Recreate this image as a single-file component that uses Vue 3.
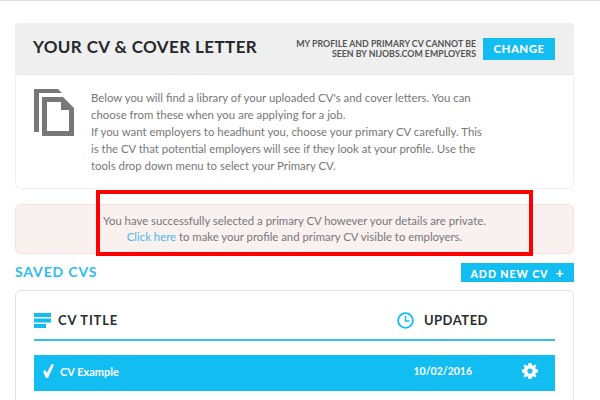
<template>
  <div class="page">
    <header class="head">
      <h1>YOUR CV &amp; COVER LETTER</h1>
      <p class="head-note">MY PROFILE AND PRIMARY CV CANNOT BE<br>SEEN BY NIJOBS.COM EMPLOYERS</p>
      <button class="change">CHANGE</button>
    </header>

    <section class="info">
      <svg class="docs" width="41" height="48" viewBox="0 0 41 48">
        <path d="M0 0H24L28 4H5V43H0Z" fill="#777" />
        <path fill-rule="evenodd" d="M8 8H29L40 19V47H8ZM13 13V42H35V21H27V13Z" fill="#777" />
      </svg>
      <p>
        Below you will find a library of your uploaded CV's and cover letters. You can<br>
        choose from these when you are applying for a job.<br>
        If you want employers to headhunt you, choose your primary CV carefully. This<br>
        is the CV that potential employers will see if they look at your profile. Use the<br>
        tools drop down menu to select your Primary CV.
      </p>
    </section>

    <section class="alert">
      <p>You have successfully selected a primary CV however your details are private.</p>
      <p class="alert-link"><a>Click here</a> to make your profile and primary CV visible to employers.</p>
    </section>

    <div class="saved-row">
      <h2>SAVED CVS</h2>
      <button class="add">ADD NEW CV<span>+</span></button>
    </div>

    <section class="panel">
      <div class="cols">
        <div class="col-title">
          <svg width="17" height="15" viewBox="0 0 17 15">
            <rect width="17" height="4" fill="#12bdf2" />
            <rect y="5.5" width="17" height="4" fill="#12bdf2" />
            <rect y="11" width="12" height="4" fill="#12bdf2" />
          </svg>
          <span>CV TITLE</span>
        </div>
        <div class="col-updated">
          <svg width="17" height="17" viewBox="0 0 17 17" fill="none" stroke="#12bdf2">
            <circle cx="8.5" cy="8.5" r="7.4" stroke-width="1.8" />
            <path d="M8.5 4V9H12.5" stroke-width="1.5" />
          </svg>
          <span>UPDATED</span>
        </div>
      </div>
      <div class="row">
        <svg class="tick" width="11" height="14" viewBox="0 0 11 14">
          <path d="M0 7.5L2.2 6L3.8 9L8.6 0L11 0.8L5 14H3Z" fill="#fff" />
        </svg>
        <span class="row-title">CV Example</span>
        <span class="row-date">10/02/2016</span>
        <svg class="gear" width="16" height="16" viewBox="0 0 16 16">
          <path fill="#fff" fill-rule="evenodd" d="M6.5 0H9.5L9.9 2.2L11.3 2.8L13.2 1.5L14.5 2.8L13.2 4.7L13.8 6.1L16 6.5V9.5L13.8 9.9L13.2 11.3L14.5 13.2L13.2 14.5L11.3 13.2L9.9 13.8L9.5 16H6.5L6.1 13.8L4.7 13.2L2.8 14.5L1.5 13.2L2.8 11.3L2.2 9.9L0 9.5V6.5L2.2 6.1L2.8 4.7L1.5 2.8L2.8 1.5L4.7 2.8L6.1 2.2ZM8 5.4A2.6 2.6 0 1 0 8 10.6A2.6 2.6 0 1 0 8 5.4Z" />
        </svg>
      </div>
    </section>

    <div class="highlight"></div>
  </div>
</template>

<script setup>
</script>

<style>
html, body { margin: 0; background: #fff; overflow: hidden; }
</style>

<style scoped>
.page {
  position: relative; width: 600px; height: 400px; overflow: hidden; box-sizing: border-box;
  padding: 22px 26px 0 15px; border-top: 1px solid #ddd;
  font-family: Lato, "Open Sans", sans-serif; color: #777; background: #fff;
}
h1, h2, p { margin: 0; }
button { border: 0; color: #fff; background: #12bdf2; font-family: inherit; font-weight: 900; padding: 0; }

.head {
  display: flex; align-items: center; height: 52px; padding: 0 19px 0 18px; box-sizing: border-box;
  background: #efefef; border-radius: 4px; border-bottom: 1px solid #e6e6e6;
}
h1 { font-size: 17px; font-weight: 700; letter-spacing: 0.4px; color: #26282c; margin-right: auto; padding-bottom: 5px; white-space: nowrap; }
.head-note { font-size: 8.8px; font-weight: 700; line-height: 10px; text-align: right; color: #555; margin-right: 7px; }
.change { width: 72px; height: 22px; font-size: 11.5px; letter-spacing: 0.4px; }

.info {
  display: flex; height: 114px; box-sizing: border-box; padding: 14px 18px 0;
  border: 1px solid #f1f1f1; border-top: 0; border-radius: 0 0 6px 6px;
}
.docs { flex: none; margin: 0 16px 0 0; }
.info p { font-size: 11.4px; line-height: 17.1px; color: #777; white-space: nowrap; }

.alert {
  margin-top: 15px; height: 50px; box-sizing: border-box; padding: 7px 0 0;
  background: #f9f0f0; border: 1px solid #f9dfdf; border-radius: 6px;
  text-align: center; font-size: 11.35px; line-height: 17px; color: #777;
}
.alert-link { margin-top: -1px; }
.alert a { color: #4ab8e8; }

.saved-row { display: flex; align-items: center; justify-content: space-between; margin-top: 9px; height: 19px; }
h2 { font-size: 14px; font-weight: 700; letter-spacing: 0.85px; color: #2fbcf0; padding-bottom: 2px; }
.add { width: 113px; height: 19px; font-size: 10.7px; letter-spacing: 0.9px; white-space: nowrap; }
.add span { margin-left: 7px; font-size: 14px; line-height: 1; }

.panel {
  margin-top: 8px; height: 120px; box-sizing: border-box; padding: 0 18px;
  border: 1px solid #e2e2e2; border-radius: 6px;
}
.cols {
  display: flex; align-items: center; height: 50px; box-sizing: border-box; padding-top: 10px;
  border-bottom: 2px solid #35bdef;
  font-size: 13px; font-weight: 700; letter-spacing: 0.8px; color: #2a2c30;
}
.col-title { display: flex; align-items: center; gap: 7px; }
.col-updated { display: flex; align-items: center; gap: 10px; margin-left: auto; margin-right: 67px; letter-spacing: 0.5px; }
.row {
  display: flex; align-items: center; height: 36px; box-sizing: border-box; margin-top: 14px; padding: 0 17px 4px 9px;
  background: #12bdf2; color: #fff; font-size: 11px; font-weight: 700;
}
.tick { flex: none; margin-right: 6px; }
.row-date { margin-left: auto; margin-right: 50px; font-size: 10.5px; }
.gear { flex: none; }

.highlight {
  position: absolute; left: 96px; top: 189px; width: 437px; height: 66px; box-sizing: border-box;
  border: 4px solid #f00;
}
</style>
